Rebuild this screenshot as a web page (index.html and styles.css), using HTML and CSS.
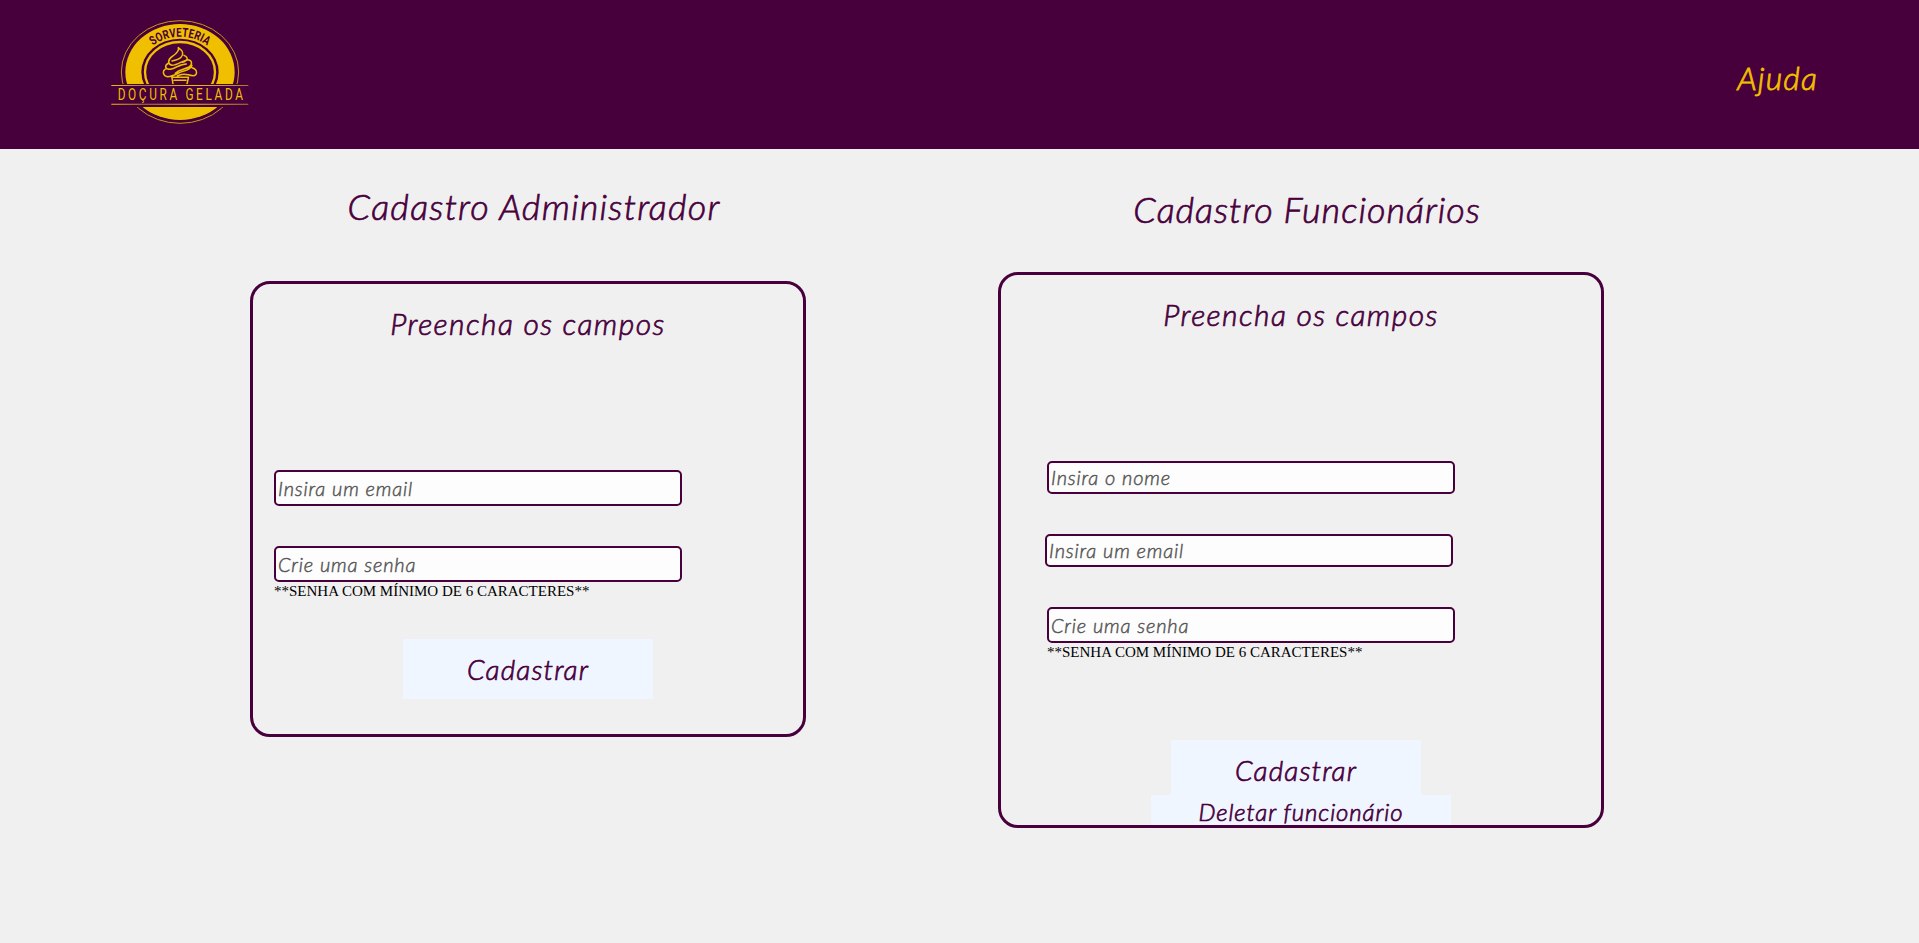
FILE: index.html
```html
<!DOCTYPE html>
<html lang="pt-br">
<head>
<meta charset="utf-8">
<title>Doçura Gelada - Cadastro</title>
<link rel="stylesheet" href="styles.css">
</head>
<body>
<header class="topbar">
  <svg class="logo" viewBox="0 0 480 375" role="img" aria-label="Sorveteria Doçura Gelada">
    <defs>
      <path id="arc" d="M118 186A122 106 0 0 1 362 186"/>
      <linearGradient id="gold"><stop offset="0" stop-color="#f0bf00"/><stop offset=".25" stop-color="#a87a30"/><stop offset=".6" stop-color="#f0bf00"/><stop offset="1" stop-color="#a87a30"/></linearGradient>
    </defs>
    <ellipse class="line" cx="240" cy="186" rx="176" ry="154"/>
    <ellipse class="fill" cx="240" cy="186" rx="164" ry="144"/>
    <ellipse class="hole" cx="240" cy="186" rx="116" ry="100"/>
    <ellipse class="ring" cx="240" cy="186" rx="105" ry="90"/>
    <path class="cone" d="M235 113C238 122 230 130 217 139C202 149 203 163 216 166C234 166 247 151 264 149C278 151 277 165 267 171C251 180 239 176 226 190M235 113C249 123 252 131 243 142C237 149 228 151 216 153M252 136C268 143 262 153 247 157M206 159C191 167 196 178 211 178C229 174 240 162 259 162M199 176C184 183 190 199 203 200C222 200 233 188 249 184C266 180 272 174 276 166M276 173C294 178 293 196 279 197C263 197 253 185 232 198M215 202H266M216 204L219 222M265 204L261 222M222 211H258"/>
    <path class="hole" d="M34 222H446V291H34Z"/>
    <path class="rule" d="M34 225H445V228H34ZM34 281H445V284H34Z"/>
    <text class="arc-text" textLength="174" lengthAdjust="spacingAndGlyphs"><textPath href="#arc" startOffset="50%" textLength="174" lengthAdjust="spacingAndGlyphs">SORVETERIA</textPath></text>
    <text class="name" transform="translate(53 269) scale(.74 1)" textLength="508" lengthAdjust="spacing">DOÇURA GELADA</text>
  </svg>
  <a class="help">Ajuda</a>
</header>
<main class="page">
  <section class="column admin">
    <h1 class="title">Cadastro Administrador</h1>
    <form class="card">
      <h2 class="subtitle">Preencha os campos</h2>
      <div class="fields">
        <input class="field tall" placeholder="Insira um email">
        <input class="field tall" placeholder="Crie uma senha">
      </div>
      <p class="note">**SENHA COM MÍNIMO DE 6 CARACTERES**</p>
      <button class="button" type="button">Cadastrar</button>
    </form>
  </section>
  <section class="column staff">
    <h1 class="title">Cadastro Funcionários</h1>
    <form class="card">
      <h2 class="subtitle">Preencha os campos</h2>
      <div class="fields">
        <input class="field" placeholder="Insira o nome">
        <input class="field outdent" placeholder="Insira um email">
        <input class="field tall" placeholder="Crie uma senha">
      </div>
      <p class="note">**SENHA COM MÍNIMO DE 6 CARACTERES**</p>
      <button class="button register" type="button">Cadastrar</button>
      <button class="button delete" type="button">Deletar funcionário</button>
    </form>
  </section>
</main>
</body>
</html>
```
FILE: styles.css
```css
* { box-sizing: border-box; }
body { margin: 0; min-height: 943px; background: #f0f0f0; color: #48003c; font-family: Lato, sans-serif; overflow: hidden; }
.topbar { height: 149px; background: #48003c; display: flex; justify-content: space-between; align-items: flex-start; padding: 10px 101px 0 100px; }
.logo { width: 160px; height: 125px; }
.logo .line { fill: none; stroke: #c39a13; stroke-width: 3; }
.logo .fill, .logo .name { fill: #f0bf00; }
.logo .hole { fill: #48003c; }
.logo .ring { fill: none; stroke: #f0bf00; stroke-width: 7; }
.logo .cone { fill: none; stroke: #f0bf00; stroke-width: 4.5; stroke-linecap: round; }
.logo .rule { fill: url(#gold); }
.arc-text { font: bold 37px Roboto, sans-serif; fill: #48003c; text-anchor: middle; }
.name { font: 48px Roboto, sans-serif; }
.help { color: #f0bf00; font-size: 32px; font-weight: 300; font-style: italic; line-height: 40px; margin-top: 48px; letter-spacing: 1.1px; -webkit-text-stroke: .8px; }
.page { display: flex; align-items: flex-start; padding-left: 250px; gap: 192px; }
.column { display: flex; flex-direction: column; }
.admin { width: 556px; padding-top: 35px; }
.staff { width: 606px; padding-top: 38px; }
.title, .subtitle, .button { -webkit-text-stroke: .7px; }
.title { margin: 0; font-weight: 300; font-style: italic; font-size: 36px; line-height: 44px; text-align: center; letter-spacing: 1.2px; padding-left: 12px; }
.staff .title { letter-spacing: .95px; }
.card { display: flex; flex-direction: column; border: 3px solid #48003c; border-radius: 20px; overflow: hidden; }
.admin .card { height: 456px; margin-top: 53px; padding: 18px 21px 0; }
.staff .card { height: 556px; margin-top: 41px; padding: 18px 46px 0; }
.subtitle { margin: 0; font-weight: 300; font-style: italic; font-size: 30px; line-height: 42px; text-align: center; letter-spacing: 1.45px; }
.fields { display: flex; flex-direction: column; gap: 40px; margin-top: 126px; }
.field { width: 408px; height: 33px; border: 2px solid #48003c; border-radius: 5px; background: #fdfdfd; padding: 0 2px 1px; font: italic 300 20px Lato, sans-serif; letter-spacing: .85px; outline: 0; -webkit-text-stroke: .45px; }
.field.tall { height: 36px; }
.field.outdent { margin-left: -2px; }
.field::placeholder { color: #555; opacity: 1; }
.note { margin: 0; color: #000; font: 15px/18px "Liberation Serif", serif; white-space: nowrap; }
.button { flex: none; align-self: center; width: 250px; height: 60px; border: 0; padding: 0 0 1px; background: #f0f6ff; color: #48003c; font: italic 300 28px Lato, sans-serif; letter-spacing: 1.15px; margin-top: 39px; }
.staff .register { margin-top: 79px; margin-right: 10px; }
.staff .delete { width: 300px; height: 34px; margin-top: -5px; font-size: 24px; letter-spacing: .9px; }
```
